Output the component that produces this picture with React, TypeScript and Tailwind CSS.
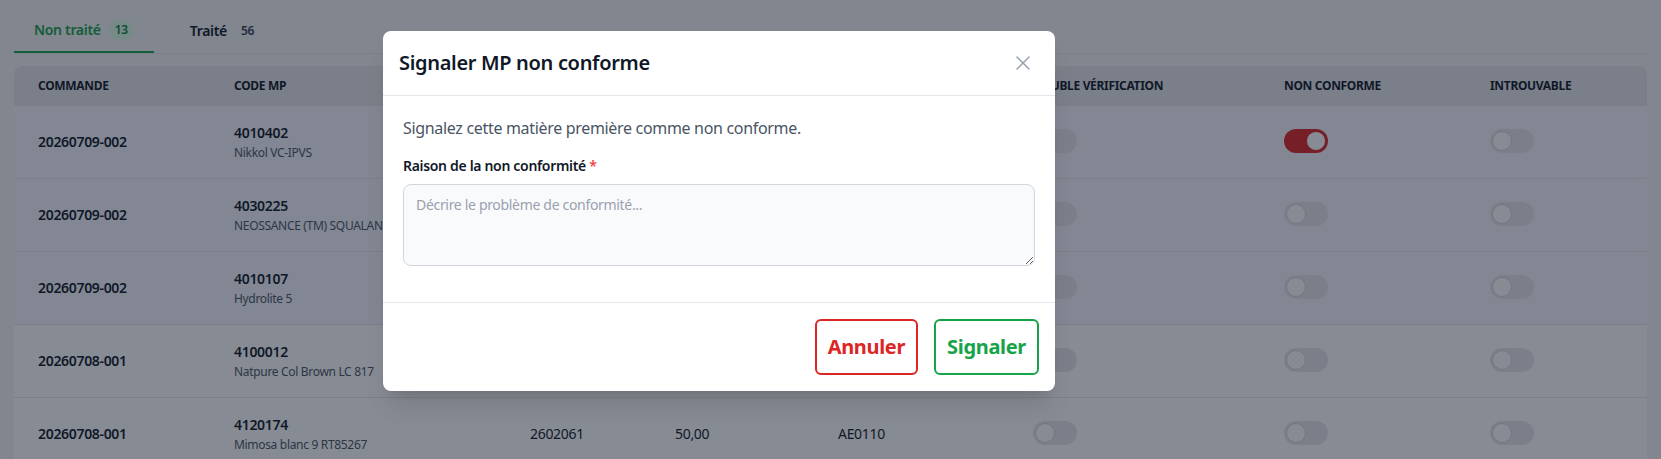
import { X } from "lucide-react";

type Row = {
  commande: string;
  code: string;
  name: string;
  lot: string;
  qty: string;
  loc: string;
  nonConforme?: boolean;
  group: "a" | "b";
};

// rows 1-4 sit under the dialog, their middle columns are not visible
const rows: Row[] = [
  { commande: "20260709-002", code: "4010402", name: "Nikkol VC-IPVS", lot: "", qty: "", loc: "", nonConforme: true, group: "a" },
  { commande: "20260709-002", code: "4030225", name: "NEOSSANCE (TM) SQUALANE", lot: "", qty: "", loc: "", group: "a" },
  { commande: "20260709-002", code: "4010107", name: "Hydrolite 5", lot: "", qty: "", loc: "", group: "a" },
  { commande: "20260708-001", code: "4100012", name: "Natpure Col Brown LC 817", lot: "", qty: "", loc: "", group: "b" },
  { commande: "20260708-001", code: "4120174", name: "Mimosa blanc 9 RT85267", lot: "2602061", qty: "50,00", loc: "AE0110", group: "b" },
];

const cols = "grid grid-cols-[196px_296px_145px_163px_195px_251px_206px_1fr]";

function Toggle({ on }: { on?: boolean }) {
  return (
    <span
      className={
        on
          ? "relative inline-flex h-6 w-11 items-center rounded-full bg-[#dc2626]"
          : "relative inline-flex h-6 w-11 items-center rounded-full bg-gray-200"
      }
    >
      <span
        className={
          on
            ? "h-5 w-5 translate-x-[22px] rounded-full border border-[#dc2626] bg-white"
            : "h-5 w-5 translate-x-[2px] rounded-full border border-gray-300 bg-white"
        }
      />
    </span>
  );
}

export default function App() {
  return (
    <div className="relative h-[459px] overflow-hidden bg-gray-100 font-['Noto_Sans',sans-serif] tracking-[-0.02em] text-gray-900">
      <div className="px-3.5">
        <div className="flex gap-4 border-b border-gray-200">
          <button className="flex items-center gap-2 border-b-2 border-[#16a34a] px-5 pb-[11px] pt-5 text-sm font-semibold text-[#16a34a]">
            Non traité
            <span className="flex h-5 items-center rounded-full bg-[#dcfce7] px-1.5 text-xs font-semibold text-[#15803d]">13</span>
          </button>
          <button className="flex items-center gap-2 px-5 pb-[11px] pt-5 text-sm font-semibold text-gray-900">
            Traité
            <span className="flex h-5 items-center rounded-full px-1.5 text-xs font-semibold text-gray-700">56</span>
          </button>
        </div>

        <div className="mt-3 overflow-hidden rounded-lg bg-white">
          <div className={`${cols} h-10 items-center bg-gray-200 text-xs font-bold uppercase text-gray-900`}>
            <div className="px-6">Commande</div>
            <div className="px-6">Code MP</div>
            <div className="px-6">Lot</div>
            <div className="px-6">Quantité</div>
            <div className="px-6">Emplacement</div>
            <div className="px-6">Double vérification</div>
            <div className="px-6">Non conforme</div>
            <div className="px-6">Introuvable</div>
          </div>
          {rows.map((r, i) => (
            <div
              key={i}
              className={`${cols} h-[73px] items-center border-b border-gray-200 text-sm ${r.group === "a" ? "bg-[#f4f7fe]" : "bg-white"}`}
            >
              <div className="px-6 font-semibold">{r.commande}</div>
              <div className="px-6">
                <div className="font-semibold leading-5">{r.code}</div>
                <div className="mt-0.5 truncate text-xs leading-4 text-gray-600">{r.name}</div>
              </div>
              <div className="px-6">{r.lot}</div>
              <div className="px-6">{r.qty}</div>
              <div className="px-6">{r.loc}</div>
              <div className="px-6"><Toggle /></div>
              <div className="px-6"><Toggle on={r.nonConforme} /></div>
              <div className="px-6"><Toggle /></div>
            </div>
          ))}
        </div>
      </div>

      {/* overlay + dialog */}
      <div className="absolute inset-0 flex items-start bg-gray-900/50 pl-[383px] pt-[31px]">
        <div className="w-[672px] rounded-lg bg-white shadow-xl">
          <div className="flex h-[65px] items-center justify-between border-b border-gray-200 pl-4 pr-5">
            <h3 className="text-xl font-semibold text-gray-900">Signaler MP non conforme</h3>
            <X size={24} strokeWidth={1.5} className="text-gray-400" />
          </div>
          <div className="px-5 pb-9 pt-5">
            <p className="text-base text-gray-600">Signalez cette matière première comme non conforme.</p>
            <label className="mb-2 mt-4 block text-sm font-semibold text-gray-900">
              Raison de la non conformité <span className="text-[#ef4444]">*</span>
            </label>
            <textarea
              rows={3}
              placeholder="Décrire le problème de conformité..."
              className="block h-[82px] w-full rounded-lg border border-gray-300 bg-gray-50 px-3 py-2.5 text-sm text-gray-900 placeholder:text-gray-400 focus:outline-none"
            />
          </div>
          <div className="flex justify-end gap-4 border-t border-gray-200 p-4">
            <button className="h-14 rounded-md border-2 border-[#dc2626] px-[11px] text-xl font-bold text-[#dc2626]">Annuler</button>
            <button className="h-14 rounded-md border-2 border-[#16a34a] px-[11px] text-xl font-bold text-[#16a34a]">Signaler</button>
          </div>
        </div>
      </div>
    </div>
  );
}
